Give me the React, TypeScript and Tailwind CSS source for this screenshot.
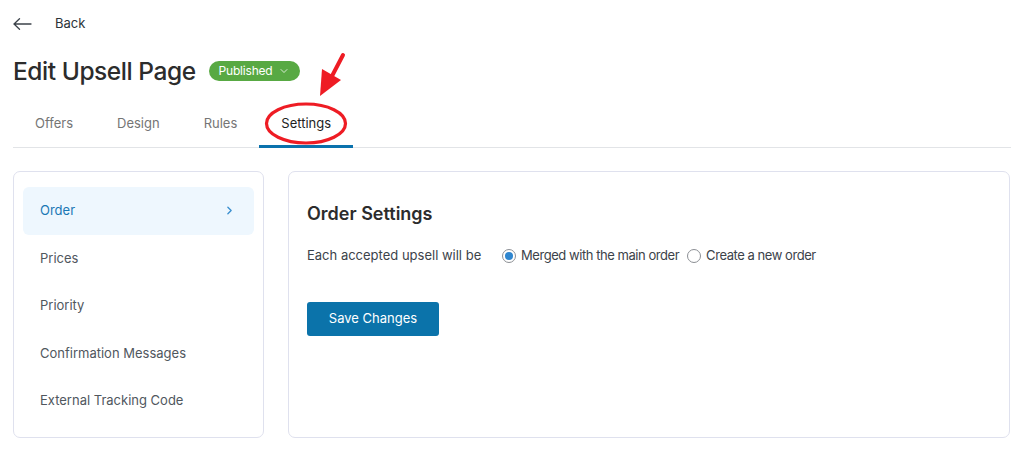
import { ChevronDown, ChevronRight } from 'lucide-react'

const TABS = ['Offers', 'Design', 'Rules', 'Settings']
const MENU = ['Order', 'Prices', 'Priority', 'Confirmation Messages', 'External Tracking Code']

export default function App() {
  return (
    <div className="w-[1024px] h-[452px] bg-white font-['Inter',sans-serif] text-[#2c3338] relative overflow-hidden">
      <div className="px-[13px]">
        {/* Back */}
        <div className="flex items-center h-[46px] pt-[2px]">
          <svg width="19" height="12" viewBox="0 0 19 12" fill="none" stroke="#3c434a" strokeWidth="1.3" strokeLinecap="round">
            <path d="M1 6h17M6.5 0.8L1 6l5.5 5.2" />
          </svg>
          <span className="ml-[23px] text-[13px] text-[#2c3338]">Back</span>
        </div>

        {/* Title */}
        <div className="flex items-center h-[50px]">
          <h1 className="text-[24.5px] font-medium tracking-[-0.45px] text-[#2c2c2c]">Edit Upsell Page</h1>
          <button className="ml-[13px] h-[20px] px-[10px] rounded-full bg-[#58a943] text-white text-[12px] tracking-[-0.2px] flex items-center gap-[5px]">
            Published
            <ChevronDown size={12} strokeWidth={1.5} />
          </button>
        </div>

        {/* Tabs */}
        <div className="flex border-b border-[#e2e4e7] h-[52px] pt-[6px]">
          {TABS.map((t) => (
            <div
              key={t}
              className={`px-[22px] flex items-center text-[13px] border-b-[3px] -mb-[1px] ${
                t === 'Settings' ? 'border-[#0a72ad] text-[#1e1e1e]' : 'border-transparent text-[#757575]'
              }`}
            >
              {t}
            </div>
          ))}
        </div>

        {/* Body */}
        <div className="flex gap-[24px] mt-[23px]">
          <div className="w-[251px] h-[267px] border border-[#dfe1ee] rounded-[7px] px-[9px] pt-[15px]">
            {MENU.map((m, i) => (
              <div
                key={m}
                className={`h-[47.5px] rounded-[6px] pl-[17px] pr-[18px] flex items-center justify-between text-[13px] ${
                  i === 0 ? 'bg-[#eef7fe] text-[#1a78b5]' : 'text-[#50575e]'
                }`}
              >
                {m}
                {i === 0 && <ChevronRight size={13} strokeWidth={2.5} className="text-[#3a8fcf]" />}
              </div>
            ))}
          </div>

          <div className="flex-1 mr-[1px] h-[267px] border border-[#dfe1ee] rounded-[7px] px-[18px] pt-[28px]">
            <h2 className="text-[18px] font-semibold text-[#2c2c2c]">Order Settings</h2>
            <div className="flex items-center mt-[19px] text-[13px] text-[#3c434a]">
              <span className="w-[195px]">Each accepted upsell will be</span>
              <label className="flex items-center gap-[5px] tracking-[-0.45px]">
                <span className="w-[14px] h-[14px] rounded-full border border-[#8c8f94] flex items-center justify-center">
                  <span className="w-[8px] h-[8px] rounded-full bg-[#2f86cf]" />
                </span>
                Merged with the main order
              </label>
              <label className="flex items-center gap-[5px] ml-[8px] tracking-[-0.45px]">
                <span className="w-[14px] h-[14px] rounded-full border border-[#8c8f94]" />
                Create a new order
              </label>
            </div>
            <button className="mt-[36px] w-[132px] h-[34px] rounded-[3px] bg-[#0b73aa] text-white text-[13px]">
              Save Changes
            </button>
          </div>
        </div>
      </div>

      {/* Annotation overlay */}
      <svg className="absolute left-0 top-0 pointer-events-none" width="1024" height="452">
        <ellipse cx="306" cy="123.5" rx="39.5" ry="19.5" fill="none" stroke="#ee1c24" strokeWidth="3.2" />
        <path d="M343 55 L331 78" stroke="#ee1c24" strokeWidth="4" strokeLinecap="round" />
        <path d="M320 96 L322 69 L341 80 Z" fill="#ee1c24" />
      </svg>
    </div>
  )
}
